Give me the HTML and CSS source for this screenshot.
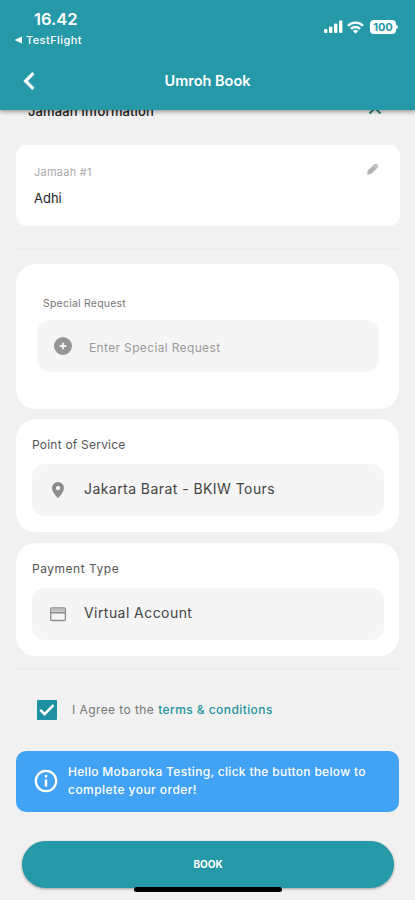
FILE: index.html
```html
<!DOCTYPE html>
<html lang="en">
<head>
  <meta charset="UTF-8">
  <meta name="viewport" content="width=device-width, initial-scale=1.0">
  <title>Umroh Book</title>
  <link rel="stylesheet" href="styles.css">
</head>
<body>
  <header class="header">
    <div class="status-bar">
      <div class="status-left">
        <div class="time">16.42</div>
        <div class="back-app">
          <svg width="8" height="8" viewBox="0 0 8 8"><path d="M8 0.5v7L0.5 4z" fill="#fff"/></svg>
          <span>TestFlight</span>
        </div>
      </div>
      <div class="status-right">
        <svg width="19" height="14" viewBox="0 0 19 14" fill="#fff">
          <rect x="0" y="9" width="3.4" height="4" rx="1"/>
          <rect x="5" y="6.5" width="3.4" height="6.5" rx="1"/>
          <rect x="10" y="3.5" width="3.4" height="9.5" rx="1"/>
          <rect x="15" y="0.5" width="3.4" height="12.5" rx="1"/>
        </svg>
        <svg class="wifi" width="17" height="13" viewBox="0 0 17 13" fill="none" stroke="#fff" stroke-width="2.3">
          <path d="M1 4.7a10.6 10.6 0 0 1 15 0"/>
          <path d="M3.9 7.9a6.5 6.5 0 0 1 9.2 0"/>
          <path d="M8.5 12.7L5.9 10a3.7 3.7 0 0 1 5.2 0z" fill="#fff" stroke="none"/>
        </svg>
        <div class="battery">100</div>
      </div>
    </div>
    <div class="nav-bar">
      <svg class="back" width="12" height="18" viewBox="0 0 12 18" fill="none" stroke="#fff" stroke-width="3.2"><path d="M10.4 1.2L2.6 9l7.8 7.8"/></svg>
      <h1>Umroh Book</h1>
    </div>
  </header>

  <main class="content">
    <div class="section-title">
      <span>Jamaah Information</span>
      <svg width="14" height="9" viewBox="0 0 14 9" fill="none" stroke="#23877f" stroke-width="2"><path d="M1.5 6.5L7 1l5.5 5.5"/></svg>
    </div>

    <div class="card jamaah">
      <div>
        <div class="jamaah-label">Jamaah #1</div>
        <div class="jamaah-name">Adhi</div>
      </div>
      <svg width="12" height="12" viewBox="0 0 12 12">
        <path d="M0.3 11.7L0.5 7.8 7.6 1.2Q9 0 10.5 1.4Q12 3 10.8 4.4L4.2 10.8z" fill="#b3b3b3"/>
        <path d="M7.4 2.7l2 2M9 1.8l1.5 1.5" stroke="#fff" stroke-width="0.8"/>
      </svg>
    </div>

    <hr>

    <div class="card request">
      <label class="small">Special Request</label>
      <div class="field">
        <svg width="18" height="18" viewBox="0 0 18 18"><circle cx="9" cy="9" r="9" fill="#959595"/><path d="M9 5.7v6.6M5.7 9h6.6" stroke="#f5f5f5" stroke-width="1.8"/></svg>
        <span class="placeholder">Enter Special Request</span>
      </div>
    </div>

    <div class="card">
      <label class="service">Point of Service</label>
      <div class="field">
        <svg width="18" height="18" viewBox="0 0 18 18"><path fill-rule="evenodd" d="M9 1a6 6 0 0 0-6 6c0 4.3 6 10.2 6 10.2S15 11.3 15 7a6 6 0 0 0-6-6zm0 3.9a2.2 2.2 0 1 1 0 4.4 2.2 2.2 0 0 1 0-4.4z" fill="#8c8c8c"/></svg>
        <span class="value">Jakarta Barat - BKIW Tours</span>
      </div>
    </div>

    <div class="card">
      <label class="payment">Payment Type</label>
      <div class="field">
        <svg width="18" height="18" viewBox="0 0 18 18"><rect x="1.7" y="3" width="14.7" height="12.5" rx="1" fill="none" stroke="#8c8c8c" stroke-width="1.3"/><path d="M2 5h14" stroke="#bdbdbd" stroke-width="3"/><path d="M1.5 7.7h15" stroke="#8c8c8c" stroke-width="1.7"/></svg>
        <span class="value">Virtual Account</span>
      </div>
    </div>

    <hr class="last">

    <div class="agree">
      <svg width="20" height="20" viewBox="0 0 20 20"><rect width="20" height="20" rx="1" fill="#1d91a1"/><path d="M3.3 9.8l4.3 4.3L16.5 5.2" fill="none" stroke="#fff" stroke-width="2.6"/></svg>
      <span class="agree-text">I Agree to the</span>
      <a href="#">terms &amp; conditions</a>
    </div>

    <div class="info">
      <svg width="24" height="24" viewBox="0 0 24 24"><circle cx="12" cy="12" r="10.2" fill="none" stroke="#fff" stroke-width="2.3"/><path d="M12 6v2.5M12 10.5v7" stroke="#fff" stroke-width="2.5"/></svg>
      <p>Hello Mobaroka Testing, click the button below to<br><span class="line2">complete your order!</span></p>
    </div>

    <button class="book">BOOK</button>
  </main>
  <div class="home-bar"></div>
</body>
</html>
```

FILE: styles.css
```css
* {
  box-sizing: border-box;
}
body {
  font-family: Inter, sans-serif;
  background: #f1f1f1;
  margin: 0;
  height: 900px;
  overflow: hidden;
  position: relative;
  color: #222;
}
svg {
  display: block;
  flex-shrink: 0;
}
.header {
  position: relative;
  z-index: 1;
  height: 110px;
  background: #2699a9;
  color: #fff;
  box-shadow: 0 2px 4px rgba(0,0,0,0.35);
}
.status-bar {
  display: flex;
  justify-content: space-between;
  height: 52px;
  padding: 10px 19px 0 14px;
}
.time {
  margin-left: 20px;
  font-size: 16.5px;
  line-height: 19px;
  font-weight: 600;
}
.back-app {
  display: flex;
  align-items: center;
  gap: 4px;
  margin-top: 4px;
  font-size: 11px;
  line-height: 14px;
  font-weight: 500;
  letter-spacing: 0.42px;
}
.status-right {
  display: flex;
  align-items: center;
  height: 34px;
}
.wifi {
  margin: 0 6px 0 4px;
}
.battery {
  position: relative;
  width: 26px;
  height: 14px;
  border-radius: 4px;
  background: #fff;
  color: #2699a9;
  font-size: 11px;
  line-height: 14px;
  font-weight: 700;
  text-align: center;
}
.battery::after {
  content: "";
  position: absolute;
  right: -2px;
  top: 5px;
  width: 2px;
  height: 4px;
  border-radius: 0 2px 2px 0;
  background: #fff;
}
.nav-bar {
  display: grid;
  grid-template-columns: 24px 1fr 24px;
  align-items: center;
  height: 57px;
  padding: 0 23px;
}
h1 {
  margin: 0;
  font-size: 14.5px;
  font-weight: 600;
  text-align: center;
}
.content {
  padding: 0 16px;
}
.section-title {
  display: flex;
  justify-content: space-between;
  align-items: center;
  height: 18px;
  margin-top: -8px;
  padding: 0 17px 0 12px;
  font-size: 13px;
  font-weight: 500;
  letter-spacing: 0.12px;
}
.card {
  height: 113px;
  margin-bottom: 10.5px;
  padding: 17px 15px 0 16px;
  border-radius: 20px;
  background: #fff;
}
.jamaah {
  display: flex;
  justify-content: space-between;
  height: 81px;
  margin: 24.5px -1px 22.5px 0;
  padding: 18px 21px 0 18px;
  border-radius: 11px;
}
.jamaah-label {
  font-size: 11px;
  line-height: 18px;
  color: #aaa;
  letter-spacing: 0.25px;
}
.jamaah-name {
  margin-top: 8px;
  font-size: 13px;
  line-height: 18px;
}
hr {
  height: 2px;
  margin: 0 -4px 14px;
  border: 0;
  background: #ededed;
}
hr.last {
  margin-top: 12.5px;
}
.request {
  height: 144.5px;
  padding: 31px 20px 0 21px;
}
label {
  display: block;
  font-size: 12px;
  line-height: 17px;
  color: #555;
}
label.small {
  margin-left: 6px;
  font-size: 10.5px;
  color: #777;
  letter-spacing: 0.22px;
}
label.service {
  letter-spacing: 0.22px;
}
label.payment {
  letter-spacing: 0.52px;
}
.field {
  display: flex;
  align-items: center;
  gap: 17px;
  height: 52px;
  margin-top: 11px;
  padding: 0 17px;
  border-radius: 13px;
  background: #f5f5f5;
}
.request .field {
  margin-top: 8px;
}
.placeholder {
  padding-top: 3px;
  font-size: 12px;
  color: #999;
  letter-spacing: 0.35px;
}
.value {
  padding-bottom: 3px;
  font-size: 14px;
  color: #444;
  letter-spacing: 0.44px;
}
.agree {
  display: flex;
  align-items: center;
  height: 20px;
  margin: 29.5px 0 31px 21px;
  font-size: 12px;
  color: #777;
  letter-spacing: 0.42px;
}
.agree-text {
  margin: 0 4px 0 15px;
}
.agree a {
  color: #23949f;
  font-weight: 500;
  text-decoration: none;
}
.info {
  display: flex;
  align-items: center;
  gap: 10px;
  height: 61px;
  padding: 0 18px;
  border-radius: 10px;
  background: #42a2f3;
  color: #fff;
}
.info p {
  margin: 0;
  padding-bottom: 1px;
  font-size: 12px;
  line-height: 18px;
  font-weight: 500;
  white-space: nowrap;
  letter-spacing: 0.31px;
}
.line2 {
  letter-spacing: 0.45px;
}
.book {
  display: block;
  width: 372px;
  height: 47px;
  margin: 29px 0 0 6px;
  border: 0;
  border-radius: 24px;
  background: #2699a9;
  box-shadow: 0 1px 3px rgba(0,0,0,0.35);
  color: #fff;
  font-family: inherit;
  font-size: 10px;
  font-weight: 700;
}
.home-bar {
  position: absolute;
  left: 134px;
  bottom: 8px;
  width: 148px;
  height: 5px;
  border-radius: 3px;
  background: #000;
}
```
